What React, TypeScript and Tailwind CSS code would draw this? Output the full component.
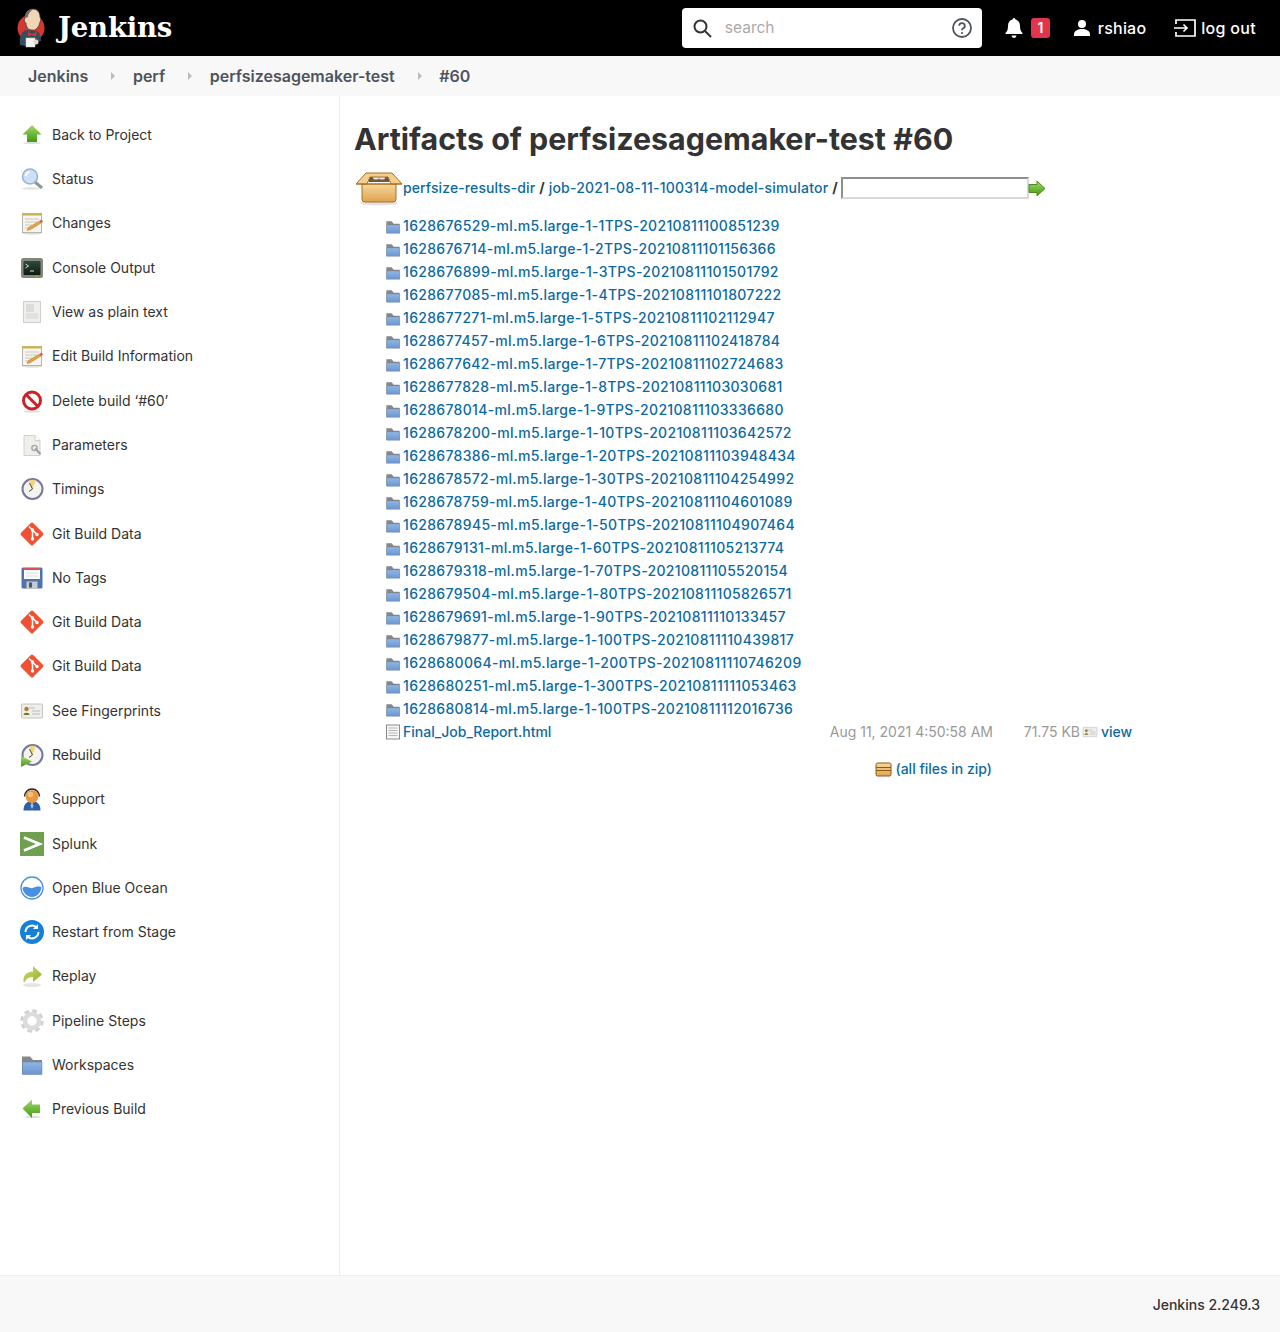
import { ReactNode } from "react";

function Svg({ size = 24, children }: { size?: number; children: ReactNode }) {
  return (
    <svg width={size} height={size} viewBox="0 0 24 24" className="shrink-0">
      {children}
    </svg>
  );
}

function Defs() {
  return (
    <svg width="0" height="0" className="absolute">
      <defs>
        <linearGradient id="green" x1="0" y1="0" x2="0" y2="1">
          <stop offset="0" stopColor="#a6d86a" />
          <stop offset="1" stopColor="#3e9c12" />
        </linearGradient>
        <linearGradient id="olive" x1="0" y1="0" x2="1" y2="1">
          <stop offset="0" stopColor="#d3dc6c" />
          <stop offset="1" stopColor="#8fb02c" />
        </linearGradient>
        <linearGradient id="blueFolder" x1="0" y1="0" x2="0" y2="1">
          <stop offset="0" stopColor="#8fb6e6" />
          <stop offset="1" stopColor="#6a96cf" />
        </linearGradient>
        <linearGradient id="carton" x1="0" y1="0" x2="0" y2="1">
          <stop offset="0" stopColor="#f6d79c" />
          <stop offset="1" stopColor="#e0a350" />
        </linearGradient>
        <linearGradient id="screen" x1="0" y1="0" x2="0" y2="1">
          <stop offset="0" stopColor="#2f4a3a" />
          <stop offset="1" stopColor="#0d1a12" />
        </linearGradient>
      </defs>
    </svg>
  );
}

const Notepad = () => (
  <Svg>
    <ellipse cx="12" cy="22.500" rx="10" ry="1.200" fill="#ddd" />
    <rect x="2.500" y="2.500" width="19" height="19" fill="#f6f5ee" stroke="#b5b5ad" />
    <rect x="2.500" y="2" width="19" height="2.500" fill="#c9b35a" />
    <path d="M5 8h14M5 11h12M5 14h7M5 17h5" stroke="#c8c8c0" />
    <path d="M7 19.500l1.500-3L19.500 10l1.500 2-10.500 6.500z" fill="#e8a33d" stroke="#a9742a" strokeWidth=".5" />
    <path d="M19.500 10l1.500 2 2-1.500-1.500-2z" fill="#d9534f" />
  </Svg>
);

const Clock = ({ play }: { play?: boolean }) => (
  <Svg>
    <circle cx="12.500" cy="12" r="10" fill="#f4f3ee" stroke="#77769c" strokeWidth="2" />
    <path d="M12.500 12L9 3.500a9 9 0 0 1 7-.2z" fill="#eed97a" />
    <path d="M9.500 6l3 6-3.500 2.500" fill="none" stroke="#444" strokeWidth="1" />
    {play && <path d="M1 13l11 5.500L1 24z" fill="url(#green)" />}
  </Svg>
);

const Git = () => (
  <Svg>
    <rect x="3.500" y="3.500" width="17" height="17" rx="1.600" transform="rotate(45 12 12)" fill="#f05033" />
    <path d="M9 4.500l3.500 3.500v9M12.500 8l4.500 4.500" stroke="#fff" strokeWidth="1.500" fill="none" />
    <circle cx="12.500" cy="8" r="1.700" fill="#fff" />
    <circle cx="12.500" cy="17" r="1.700" fill="#fff" />
    <circle cx="17" cy="12.500" r="1.700" fill="#fff" />
  </Svg>
);

const Card = ({ size = 24 }: { size?: number }) => (
  <Svg size={size}>
    <rect x="1.500" y="5" width="21" height="14" rx="1" fill="#eeeeea" stroke="#c4c4be" />
    <path d="M9 9h6M12 12h8M12 15h8" stroke="#bbb" />
    <circle cx="6.500" cy="10" r="2.200" fill="#a9812f" />
    <path d="M3.500 16c0-3 6-3 6 0z" fill="#6d7a2e" />
  </Svg>
);

const Folder = ({ size = 24 }: { size?: number }) => (
  <Svg size={size}>
    <path d="M2 21V3.500h8l3 3.500h9v14z" fill="#85878a" />
    <path d="M2.500 9h19.500v12.500H2.500z" fill="url(#blueFolder)" stroke="#6a7f99" strokeWidth=".5" />
  </Svg>
);

const Doc = () => (
  <Svg>
    <path d="M4 2.500h11l5 5v15H4z" fill="#eeeeea" stroke="#d2d2cc" />
    <path d="M15 2.500v5h5" fill="#fafafa" stroke="#d2d2cc" />
    <path d="M15 15.500l5.500 5.500" stroke="#9a9a9a" strokeWidth="2" />
    <circle cx="14.500" cy="15" r="2.600" fill="none" stroke="#a5a5a5" strokeWidth="1.400" />
  </Svg>
);

const sidebar: { label: string; icon: ReactNode }[] = [
  {
    label: "Back to Project",
    icon: (
      <Svg>
        <ellipse cx="12" cy="20" rx="9" ry="1.200" fill="#ddd" />
        <path d="M12 2l9.500 9.500H17V19H7v-7.500H2.500z" fill="url(#green)" />
      </Svg>
    ),
  },
  {
    label: "Status",
    icon: (
      <Svg>
        <ellipse cx="11" cy="21.500" rx="9" ry="1.200" fill="#e2e2e2" />
        <path d="M15 15l7 6" stroke="#8f959b" strokeWidth="3" />
        <circle cx="10" cy="9.500" r="7.500" fill="#cfe0f6" stroke="#94b2d6" strokeWidth="1.500" />
        <path d="M5.500 9a5 5 0 0 1 4-4" stroke="#fff" strokeWidth="1.500" fill="none" />
      </Svg>
    ),
  },
  { label: "Changes", icon: <Notepad /> },
  {
    label: "Console Output",
    icon: (
      <Svg>
        <rect x="1" y="2" width="22" height="20" rx="2.500" fill="#83877d" />
        <rect x="3.500" y="5" width="17" height="14" rx="1" fill="url(#screen)" />
        <path d="M5.500 8l3 2-3 2M10 15h4" stroke="#d6e8d6" strokeWidth="1" fill="none" />
        <rect x="16" y="20" width="1" height="1" fill="#8ee04a" />
      </Svg>
    ),
  },
  {
    label: "View as plain text",
    icon: (
      <Svg>
        <rect x="3.500" y="1.500" width="17" height="21" fill="#eeeeec" stroke="#cfcfcb" />
        <rect x="6" y="4" width="8" height="8" fill="#dcdcda" />
        <rect x="6" y="13" width="12" height="6" fill="#e0e0de" />
      </Svg>
    ),
  },
  { label: "Edit Build Information", icon: <Notepad /> },
  {
    label: "Delete build ‘#60’",
    icon: (
      <Svg>
        <ellipse cx="12" cy="22.500" rx="8" ry="1" fill="#ddd" />
        <circle cx="12" cy="11.500" r="8.500" fill="#fff" stroke="#cf2027" strokeWidth="3" />
        <path d="M6 5.500l12 12" stroke="#cf2027" strokeWidth="3" />
      </Svg>
    ),
  },
  { label: "Parameters", icon: <Doc /> },
  { label: "Timings", icon: <Clock /> },
  { label: "Git Build Data", icon: <Git /> },
  {
    label: "No Tags",
    icon: (
      <Svg>
        <rect x="1.500" y="1.500" width="21" height="21" rx="1.500" fill="#4f74ad" />
        <rect x="4" y="2" width="16" height="11" fill="#fbfbfb" />
        <rect x="4" y="2" width="16" height="2" fill="#d9534f" />
        <path d="M6 7h12M6 10h12" stroke="#ddd" />
        <rect x="6.500" y="15.500" width="11" height="7" fill="#c4cad2" />
        <rect x="9" y="16.500" width="3" height="5" fill="#555" />
      </Svg>
    ),
  },
  { label: "Git Build Data", icon: <Git /> },
  { label: "Git Build Data", icon: <Git /> },
  { label: "See Fingerprints", icon: <Card /> },
  { label: "Rebuild", icon: <Clock play /> },
  {
    label: "Support",
    icon: (
      <Svg>
        <path d="M3.500 23.500c0-7 4-9.500 8.500-9.500s8.500 2.500 8.500 9.500z" fill="#2f5fa5" />
        <path d="M12 14l-1.500 5 1.500 3 1.500-3z" fill="#9cc0e8" />
        <path d="M4.500 9.500a7.500 7.500 0 0 1 15 0" fill="none" stroke="#222" strokeWidth="1.500" />
        <circle cx="12" cy="9.500" r="6.500" fill="#e8983c" />
        <circle cx="10.500" cy="7.500" r="2.800" fill="#f4c080" />
      </Svg>
    ),
  },
  {
    label: "Splunk",
    icon: (
      <Svg>
        <rect width="24" height="24" fill="#6ea04f" />
        <path d="M4 5.500l15.500 6.500L4 18.500" fill="none" stroke="#fff" strokeWidth="2.800" />
      </Svg>
    ),
  },
  {
    label: "Open Blue Ocean",
    icon: (
      <Svg>
        <circle cx="12" cy="12" r="11" fill="#fff" stroke="#4a90e2" strokeWidth="1.300" />
        <path d="M2.500 12c4-3 7 1 10 0s5-2 9-1c-.5 6-5 10-9.500 10S3 17 2.500 12z" fill="#4a90e2" />
      </Svg>
    ),
  },
  {
    label: "Restart from Stage",
    icon: (
      <Svg>
        <circle cx="12" cy="12" r="12" fill="#1580d6" />
        <path d="M5.500 12a6.500 6.500 0 0 1 11-4.500M18.500 12a6.500 6.500 0 0 1-11 4.500" fill="none" stroke="#fff" strokeWidth="2" />
        <path d="M18 4v5h-5zM6 20v-5h5z" fill="#fff" />
      </Svg>
    ),
  },
  {
    label: "Replay",
    icon: (
      <Svg>
        <ellipse cx="12" cy="21" rx="9" ry="2" fill="#e4e4e4" />
        <path d="M4 19c-2-7 2-11 9-11.500V2l9 8.500-9 7.500v-5c-4-.5-7 1.500-9 6z" fill="url(#olive)" />
      </Svg>
    ),
  },
  {
    label: "Pipeline Steps",
    icon: (
      <Svg>
        <circle cx="12" cy="12" r="10" fill="none" stroke="#d2d2d2" strokeWidth="3.500" strokeDasharray="4.500 3.350" />
        <circle cx="12" cy="12" r="7" fill="none" stroke="#dcdcdc" strokeWidth="4.500" />
        <circle cx="12" cy="12" r="3.500" fill="#fff" />
      </Svg>
    ),
  },
  { label: "Workspaces", icon: <Folder /> },
  {
    label: "Previous Build",
    icon: (
      <Svg>
        <ellipse cx="13" cy="20" rx="8" ry="1.200" fill="#ddd" />
        <path d="M2.500 11.500L12 2.500V7.500h8V16h-8v5z" fill="url(#green)" />
      </Svg>
    ),
  },
];

const dirs = [
  "1628676529-ml.m5.large-1-1TPS-20210811100851239",
  "1628676714-ml.m5.large-1-2TPS-20210811101156366",
  "1628676899-ml.m5.large-1-3TPS-20210811101501792",
  "1628677085-ml.m5.large-1-4TPS-20210811101807222",
  "1628677271-ml.m5.large-1-5TPS-20210811102112947",
  "1628677457-ml.m5.large-1-6TPS-20210811102418784",
  "1628677642-ml.m5.large-1-7TPS-20210811102724683",
  "1628677828-ml.m5.large-1-8TPS-20210811103030681",
  "1628678014-ml.m5.large-1-9TPS-20210811103336680",
  "1628678200-ml.m5.large-1-10TPS-20210811103642572",
  "1628678386-ml.m5.large-1-20TPS-20210811103948434",
  "1628678572-ml.m5.large-1-30TPS-20210811104254992",
  "1628678759-ml.m5.large-1-40TPS-20210811104601089",
  "1628678945-ml.m5.large-1-50TPS-20210811104907464",
  "1628679131-ml.m5.large-1-60TPS-20210811105213774",
  "1628679318-ml.m5.large-1-70TPS-20210811105520154",
  "1628679504-ml.m5.large-1-80TPS-20210811105826571",
  "1628679691-ml.m5.large-1-90TPS-20210811110133457",
  "1628679877-ml.m5.large-1-100TPS-20210811110439817",
  "1628680064-ml.m5.large-1-200TPS-20210811110746209",
  "1628680251-ml.m5.large-1-300TPS-20210811111053463",
  "1628680814-ml.m5.large-1-100TPS-20210811112016736",
];

function Logo() {
  return (
    <svg width="30" height="40" viewBox="0 0 30 40" className="shrink-0">
      <circle cx="15" cy="20" r="13.500" fill="#d33833" />
      <path d="M4 37c-1-8 2-14 6-15l10 1c4 1 5 5 5 10l-5 1-1 4H9z" fill="#335061" />
      <path d="M9 10c0-6 4-9 8-9s7 3 7 8c1 2 1 4 0 5-1 5-4 9-8 8-4 0-6-3-6-7-2 0-2-4-1-5z" fill="#f0d6b7" stroke="#49382c" strokeWidth=".8" />
      <path d="M9 10c0-6 4-9 8-9 1 0-5 3-5 8z" fill="#6d6b6d" />
      <path d="M12 24l4 2 5-2-1 4-4-1-4 1z" fill="#d33833" />
      <rect x="10" y="30" width="9" height="9" fill="#f4f4f2" stroke="#ccc" strokeWidth=".5" />
      <circle cx="20" cy="34" r="2.500" fill="#f0d6b7" />
    </svg>
  );
}

function Arrow() {
  return <span className="mr-[17.5px] ml-[23px] h-0 w-0 border-y-4 border-l-4 border-y-transparent border-l-[#b8bcc0]" />;
}

function CartonIcon() {
  return (
    <svg width="48" height="36" viewBox="0 0 48 36" className="shrink-0">
      <ellipse cx="24" cy="33" rx="19" ry="2.500" fill="#e2e2e2" />
      <path d="M12 7h24l-2 5H14z" fill="#6e5a3a" />
      <ellipse cx="21" cy="8" rx="3" ry="1.500" fill="#e6e6e6" />
      <ellipse cx="27" cy="8" rx="3" ry="1.500" fill="#e6e6e6" />
      <path d="M7 14h34v15a3 3 0 0 1-3 3H10a3 3 0 0 1-3-3z" fill="url(#carton)" stroke="#a86f1f" />
      <path d="M1 14L11 3h26l10 11H36L33 7H15l-3 7z" fill="#f3cf8f" stroke="#a86f1f" strokeLinejoin="round" />
      <path d="M1 14h46" stroke="#a86f1f" />
    </svg>
  );
}

export default function App() {
  return (
    <div className="flex h-[1332px] flex-col overflow-hidden bg-white font-[Inter,sans-serif] text-sm text-[#333]">
      <Defs />
      <header className="flex h-14 shrink-0 items-center bg-black pr-6 pl-4 text-white">
        <Logo />
        <span className="ml-[12px] font-['DejaVu_Serif',serif] text-[27.500px] font-bold tracking-[-0.2px]">Jenkins</span>
        <div className="ml-auto flex h-10 w-[300px] items-center rounded bg-white pr-[10px] pl-[10px]">
          <svg width="20" height="20" viewBox="0 0 20 20" className="shrink-0">
            <circle cx="8.500" cy="8.500" r="6" fill="none" stroke="#333" strokeWidth="2" />
            <path d="M13 13l6 6" stroke="#333" strokeWidth="2" />
          </svg>
          <span className="mt-px ml-[13px] text-[15.500px] text-[#aaa]">search</span>
          <svg width="20" height="20" viewBox="0 0 20 20" className="ml-auto shrink-0">
            <circle cx="10" cy="10" r="9" fill="none" stroke="#4d545d" strokeWidth="1.800" />
            <path d="M7.200 7.800A2.800 2.800 0 1 1 11 10.500c-.8.400-1 .8-1 1.800" fill="none" stroke="#4d545d" strokeWidth="1.800" />
            <circle cx="10" cy="15" r="1.100" fill="#4d545d" />
          </svg>
        </div>
        <svg width="18" height="22" viewBox="0 0 18 22" className="ml-[23px] shrink-0">
          <path d="M9 1a1.500 1.500 0 0 1 1.500 1.500C13.500 3.200 15 5.500 15 9c0 4 1 5.500 2.500 7v1H.5v-1C2 14.500 3 13 3 9c0-3.500 1.500-5.800 4.500-6.500A1.500 1.500 0 0 1 9 1z" fill="#fff" />
          <path d="M6.500 18.500h5a2.500 2.500 0 0 1-5 0z" fill="#fff" />
        </svg>
        <span className="ml-[8px] flex h-5 w-[19px] items-center justify-center rounded-[3px] bg-[#e0354a] text-sm font-semibold text-white">1</span>
        <svg width="18" height="18" viewBox="0 0 18 18" className="ml-[23px] shrink-0">
          <circle cx="9" cy="5" r="4" fill="#fff" />
          <path d="M1 17v-2c0-3 4-5 8-5s8 2 8 5v2z" fill="#fff" />
        </svg>
        <span className="ml-[7px] text-base font-medium tracking-[0.2px]">rshiao</span>
        <svg width="24" height="20" viewBox="0 0 24 20" className="ml-[27px] shrink-0">
          <path d="M3 6V2h19v16H3v-4" fill="none" stroke="#fff" strokeWidth="1.700" />
          <path d="M1 10h13M10.500 6.500L14 10l-3.500 3.500" fill="none" stroke="#fff" strokeWidth="1.700" />
        </svg>
        <span className="ml-[4px] text-base font-medium tracking-[0.3px]">log out</span>
      </header>

      <nav className="flex h-10 shrink-0 items-center bg-[#f8f8f8] pl-7 text-base font-semibold text-[#4d545d]">
        <span>Jenkins</span>
        <Arrow />
        <span>perf</span>
        <Arrow />
        <span>perfsizesagemaker-test</span>
        <Arrow />
        <span>#60</span>
      </nav>

      <div className="flex min-h-0 flex-1">
        <aside className="w-[340px] shrink-0 border-r border-[#eee] pt-[16.700px]">
          {sidebar.map((item, i) => (
            <div key={i} className="flex h-[44.300px] items-center gap-2 pl-5">
              {item.icon}
              <span>{item.label}</span>
            </div>
          ))}
        </aside>

        <main className="min-w-0 flex-1 pl-[15px]">
          <h1 className="mt-[23px] -ml-px text-[30.400px] leading-10 font-bold text-[#333]">Artifacts of perfsizesagemaker-test #60</h1>
          <div className="mt-[11px] flex h-9 items-center font-medium">
            <CartonIcon />
            <a className="tracking-[0.1px] text-[#0b6aa2]">perfsize-results-dir</a>
            <span className="mx-1 font-bold text-[#333]">/</span>
            <a className="tracking-[0.22px] text-[#0b6aa2]">job-2021-08-11-100314-model-simulator</a>
            <span className="ml-1 font-bold text-[#333]">/</span>
            <input className="ml-[3px] h-[22px] w-[188px] border-2 border-t-[#8f8f8f] border-r-[#d9d9d9] border-b-[#d9d9d9] border-l-[#8f8f8f] bg-white" />
            <svg width="18" height="17" viewBox="0 0 18 17" className="-ml-px shrink-0">
              <path d="M1 4.500h8V1l8 7.500-8 7.500v-3.500H1z" fill="url(#green)" stroke="#4c8a1e" />
            </svg>
          </div>

          <div className="mt-[8px] ml-[30px] w-[748px] font-medium">
            {dirs.map((name) => (
              <div key={name} className="flex h-[23px] items-center gap-[2px] text-[#0b6aa2]">
                <span className="mt-[3px]"><Folder size={16} /></span>
                <a className="tracking-[0.32px]">{name}</a>
              </div>
            ))}
            <div className="flex h-[23px] items-center gap-[2px]">
              <svg width="16" height="16" viewBox="0 0 16 16" className="shrink-0">
                <rect x="1.500" y="1" width="13" height="14" fill="#f7f7f5" stroke="#8a8a8a" />
                <path d="M3.500 4h9M3.500 6.500h9M3.500 9h9M3.500 11.500h9" stroke="#b5b5b5" />
              </svg>
              <a className="text-[#0b6aa2]">Final_Job_Report.html</a>
              <span className="ml-auto w-[180px] text-right font-normal text-[#999]">Aug 11, 2021 4:50:58 AM</span>
              <span className="w-[85px] text-right font-normal text-[#999]">71.75 KB</span>
              <Card size={16} />
              <a className="ml-px w-[32px] text-[#0b6aa2]">view</a>
            </div>
            <div className="mt-[14px] flex h-[23px] w-[607px] items-center justify-end gap-[4px] text-[#0b6aa2]">
              <svg width="17" height="16" viewBox="0 0 17 16" className="shrink-0">
                <rect x="1" y="2" width="15" height="13" rx="1.500" fill="url(#carton)" stroke="#8a5a1a" />
                <path d="M1 6.500h15M1 9.500h15" stroke="#8a5a1a" />
              </svg>
              <a>(all files in zip)</a>
            </div>
          </div>
        </main>
      </div>

      <footer className="flex h-[57px] shrink-0 items-center justify-end border-t border-[#eee] bg-[#f8f8f8] pt-[2px] pr-5 font-medium text-[#333]">
        Jenkins 2.249.3
      </footer>
    </div>
  );
}
